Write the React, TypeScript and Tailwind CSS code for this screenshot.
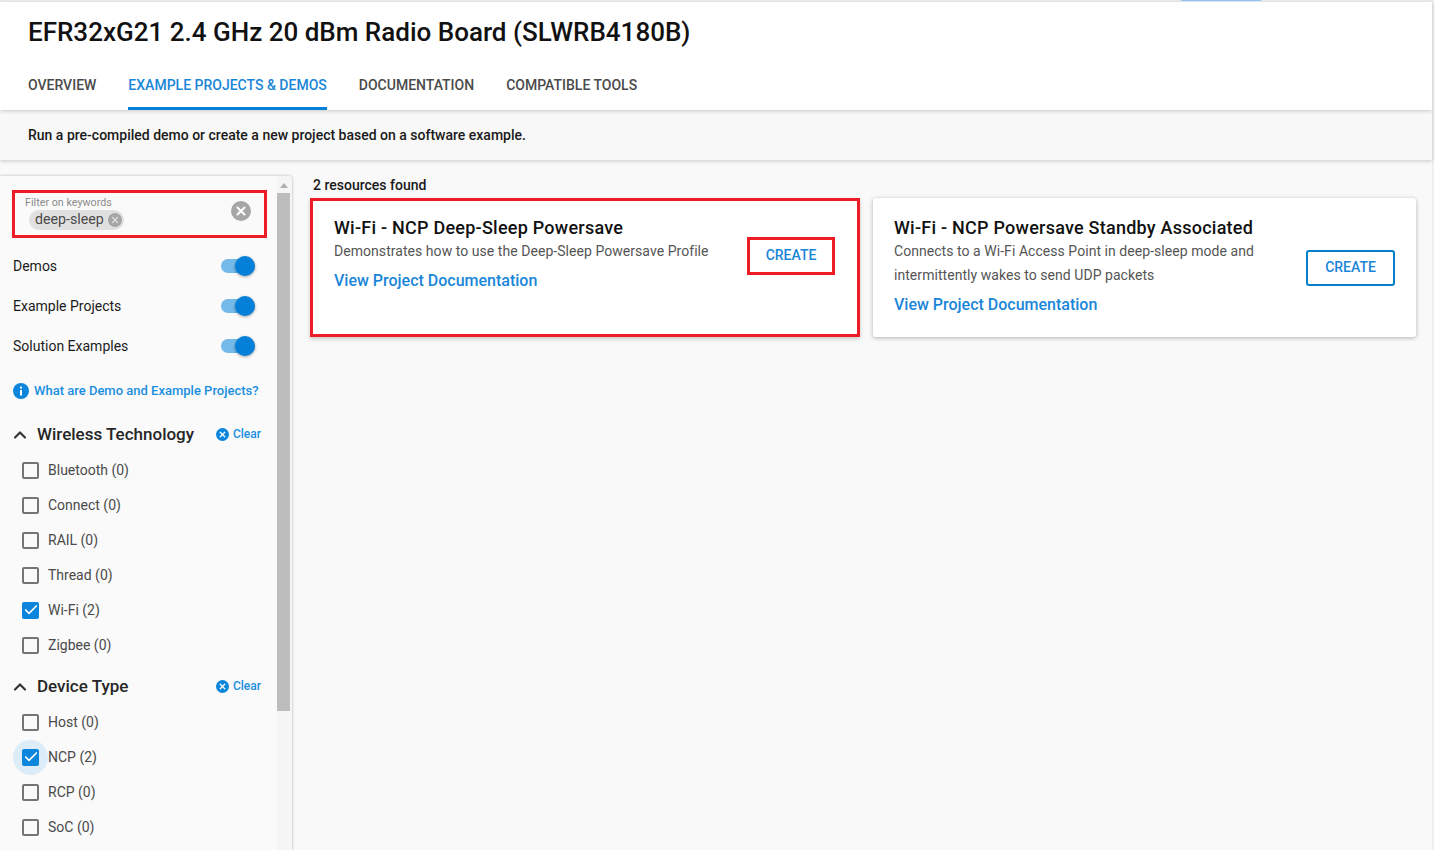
import { Check, ChevronUp, X } from "lucide-react";

const wireless = [
  { label: "Bluetooth (0)" },
  { label: "Connect (0)" },
  { label: "RAIL (0)" },
  { label: "Thread (0)" },
  { label: "Wi-Fi (2)", checked: true },
  { label: "Zigbee (0)" },
];

const deviceType = [
  { label: "Host (0)" },
  { label: "NCP (2)", checked: true, focused: true },
  { label: "RCP (0)" },
  { label: "SoC (0)" },
];

function Toggle({ label }: { label: string }) {
  return (
    <div className="flex h-10 items-center justify-between pl-[13px] pr-[22px]">
      <span className="text-[14px] text-[#1a1a1a]">{label}</span>
      <div className="relative h-[14px] w-[34px] rounded-full bg-[#73b9ea]">
        <div className="absolute -top-[3px] left-[14px] h-5 w-5 rounded-full bg-[#0480d8] shadow-[0_1px_3px_rgba(0,0,0,0.35)]" />
      </div>
    </div>
  );
}

function FilterItem({ label, checked, focused }: { label: string; checked?: boolean; focused?: boolean }) {
  return (
    <div className="flex h-[35px] items-center pl-[22px]">
      <div className="relative mr-[9px] h-[17px] w-[17px] shrink-0">
        {focused && <div className="absolute -left-[9px] -top-[9px] h-[35px] w-[35px] rounded-full bg-[#dcecf8]" />}
        {checked ? (
          <div className="relative flex h-[17px] w-[17px] items-center justify-center rounded-[2px] bg-[#0b86dc]">
            <Check size={16} strokeWidth={2.5} className="text-white" />
          </div>
        ) : (
          <div className="h-[17px] w-[17px] rounded-[2px] border-2 border-[#757575]" />
        )}
      </div>
      <span className="relative text-[14px] text-[#4a4a4a]">{label}</span>
    </div>
  );
}

function FilterGroup({ title, items }: { title: string; items: typeof deviceType }) {
  return (
    <div>
      <div className="flex h-[36px] items-center pl-[10px] pr-[16px]">
        <ChevronUp size={20} strokeWidth={2.6} className="text-[#333333]" />
        <span className="ml-[7px] flex-1 text-[17px] font-medium text-[#262626]">{title}</span>
        <div className="-mt-[1px] flex items-center">
          <div className="mr-[4px] mt-[1px] flex h-[13px] w-[13px] items-center justify-center rounded-full bg-[#0b86dc]">
            <X size={9} strokeWidth={3.5} className="text-white" />
          </div>
          <span className="text-[12px] font-medium text-[#1a8fe0]">Clear</span>
        </div>
      </div>
      {items.map((item) => (
        <FilterItem key={item.label} {...item} />
      ))}
    </div>
  );
}

function Sidebar() {
  return (
    <aside className="relative flex h-[674px] w-[292px] shrink-0 overflow-hidden rounded-tr-[3px] bg-[#fafafa] shadow-[0_0_3px_rgba(0,0,0,0.3)]">
      <div className="w-[277px] shrink-0">
        <div className="relative ml-[12px] mt-[14px] h-[48px] w-[255px] border-[3px] border-[#ee1c25] pl-[13px]">
          <div className="-ml-[3px] pt-[3px] text-[10.75px] leading-[13px] text-[#8a8a8a]">Filter on keywords</div>
          <div className="ml-[1px] mt-[1px] flex h-[20px] w-[95px] items-center justify-between rounded-full bg-[#e0e0e0] pl-[6px] pr-[2px]">
            <span className="text-[14.2px] text-[#4a4a4a]">deep-sleep</span>
            <div className="flex h-[14px] w-[14px] items-center justify-center rounded-full bg-[#a6a6a6]">
              <X size={10} strokeWidth={3} className="text-[#e0e0e0]" />
            </div>
          </div>
          <div className="absolute right-[13px] top-[8px] flex h-5 w-5 items-center justify-center rounded-full bg-[#a6a6a6]">
            <X size={14} strokeWidth={3.5} className="text-white" />
          </div>
        </div>
        <div className="mt-[8px]">
          <Toggle label="Demos" />
          <Toggle label="Example Projects" />
          <Toggle label="Solution Examples" />
        </div>
        <div className="mt-[15px] flex items-center pl-[13px]">
          <svg width="16" height="16" viewBox="0 0 16 16" aria-hidden="true">
            <circle cx="8" cy="8" r="8" fill="#0b86dc" />
            <rect x="7" y="7" width="2" height="5.5" fill="#ffffff" />
            <rect x="7" y="3.6" width="2" height="2" fill="#ffffff" />
          </svg>
          <span className="ml-[5px] text-[13px] font-medium text-[#1a8fe0]">What are Demo and Example Projects?</span>
        </div>
        <div className="mt-[16px]">
          <FilterGroup title="Wireless Technology" items={wireless} />
        </div>
        <div className="mt-[6px]">
          <FilterGroup title="Device Type" items={deviceType} />
        </div>
      </div>
      {/* scrollbar */}
      <div className="flex w-[15px] flex-col bg-[#f5f5f5]">
        <div className="ml-[3px] mt-[7px] h-0 w-0 border-x-[4px] border-b-[5px] border-x-transparent border-b-[#b0b0b0]" />
        <div className="mt-[5px] h-[518px] w-[13px] bg-[#bdbdbd]" />
      </div>
    </aside>
  );
}

function ResourceCard({
  title,
  lines,
  highlighted,
}: {
  title: string;
  lines: string[];
  highlighted?: boolean;
}) {
  return (
    <div
      className={
        highlighted
          ? "flex h-[139px] w-[550px] items-start justify-between border-[3px] border-[#ee1c25] bg-white pl-[21px] pr-[22px] pt-[16px] shadow-[0_2px_4px_rgba(0,0,0,0.2)]"
          : "flex h-[139px] w-[543px] items-start justify-between rounded-[3px] bg-white pl-[21px] pr-[21px] pt-[19px] shadow-[0_1px_4px_rgba(0,0,0,0.3)]"
      }
    >
      <div>
        <div className="text-[18px] font-medium leading-[22px] tracking-[0.24px] text-[#111111]">{title}</div>
        {lines.map((line) => (
          <div key={line} className="text-[14px] leading-[24px] tracking-[0.05px] text-[#555555]">
            {line}
          </div>
        ))}
        <div className="mt-[6px] text-[16px] font-medium leading-[24px] text-[#1a86d8]">View Project Documentation</div>
      </div>
      <button
        className={
          highlighted
            ? "mt-[20px] flex h-[38px] w-[88px] items-center justify-center border-[3px] border-[#ee1c25] pb-[1px] text-[14px] font-medium text-[#1a86d8]"
            : "mt-[33px] flex h-[36px] w-[89px] items-center justify-center rounded-[3px] border-2 border-[#0480c8] pb-[2px] text-[14px] font-medium text-[#1a86d8]"
        }
      >
        CREATE
      </button>
    </div>
  );
}

export default function App() {
  return (
    <div className="h-[850px] w-[1438px] overflow-hidden bg-white font-['Roboto',sans-serif]">
      <div className="h-[850px] w-[1434px] border-r-2 border-[#eeeeee] bg-[#f9f9f9]">
        {/* top strip */}
        <div className="h-[2px] bg-[#eeeeee] pl-[1181px]">
          <div className="h-[1px] w-[80px] bg-[#90caf9]" />
        </div>

        {/* Header */}
        <header className="relative z-20 bg-white shadow-[0_1px_4px_rgba(0,0,0,0.2)]">
          <h1 className="pl-[28px] pt-[12px] text-[26px] font-medium leading-[36px] text-[#111111]">
            EFR32xG21 2.4 GHz 20 dBm Radio Board (SLWRB4180B)
          </h1>
          <nav className="mt-[14px] flex h-[46px] gap-[32px] pl-[28px] pb-[4px] text-[14px] font-medium">
            <div className="flex items-center text-[#4a4a4a]">OVERVIEW</div>
            <div className="-mb-[4px] flex items-center border-b-[3px] border-[#0480d8] pb-[1px] text-[#1a86d8]">EXAMPLE PROJECTS &amp; DEMOS</div>
            <div className="flex items-center text-[#4a4a4a]">DOCUMENTATION</div>
            <div className="flex items-center text-[#4a4a4a]">COMPATIBLE TOOLS</div>
          </nav>
        </header>

        {/* Description */}
        <div className="relative z-10 flex h-[50px] items-center bg-[#f8f8f8] pl-[28px] text-[14px] font-medium text-[#1a1a1a] shadow-[0_1px_4px_rgba(0,0,0,0.2)]">
          Run a pre-compiled demo or create a new project based on a software example.
        </div>

        <div className="flex pt-[16px]">
          <Sidebar />
          <main className="pl-[21px]">
            <div className="text-[14px] font-medium leading-[18px] text-[#1a1a1a]">2 resources found</div>
            <div className="mt-[4px] flex items-start gap-[13px] -ml-[3px]">
              <ResourceCard highlighted title="Wi-Fi - NCP Deep-Sleep Powersave" lines={["Demonstrates how to use the Deep-Sleep Powersave Profile"]} />
              <ResourceCard
                title="Wi-Fi - NCP Powersave Standby Associated"
                lines={["Connects to a Wi-Fi Access Point in deep-sleep mode and", "intermittently wakes to send UDP packets"]}
              />
            </div>
          </main>
        </div>
      </div>
    </div>
  );
}
